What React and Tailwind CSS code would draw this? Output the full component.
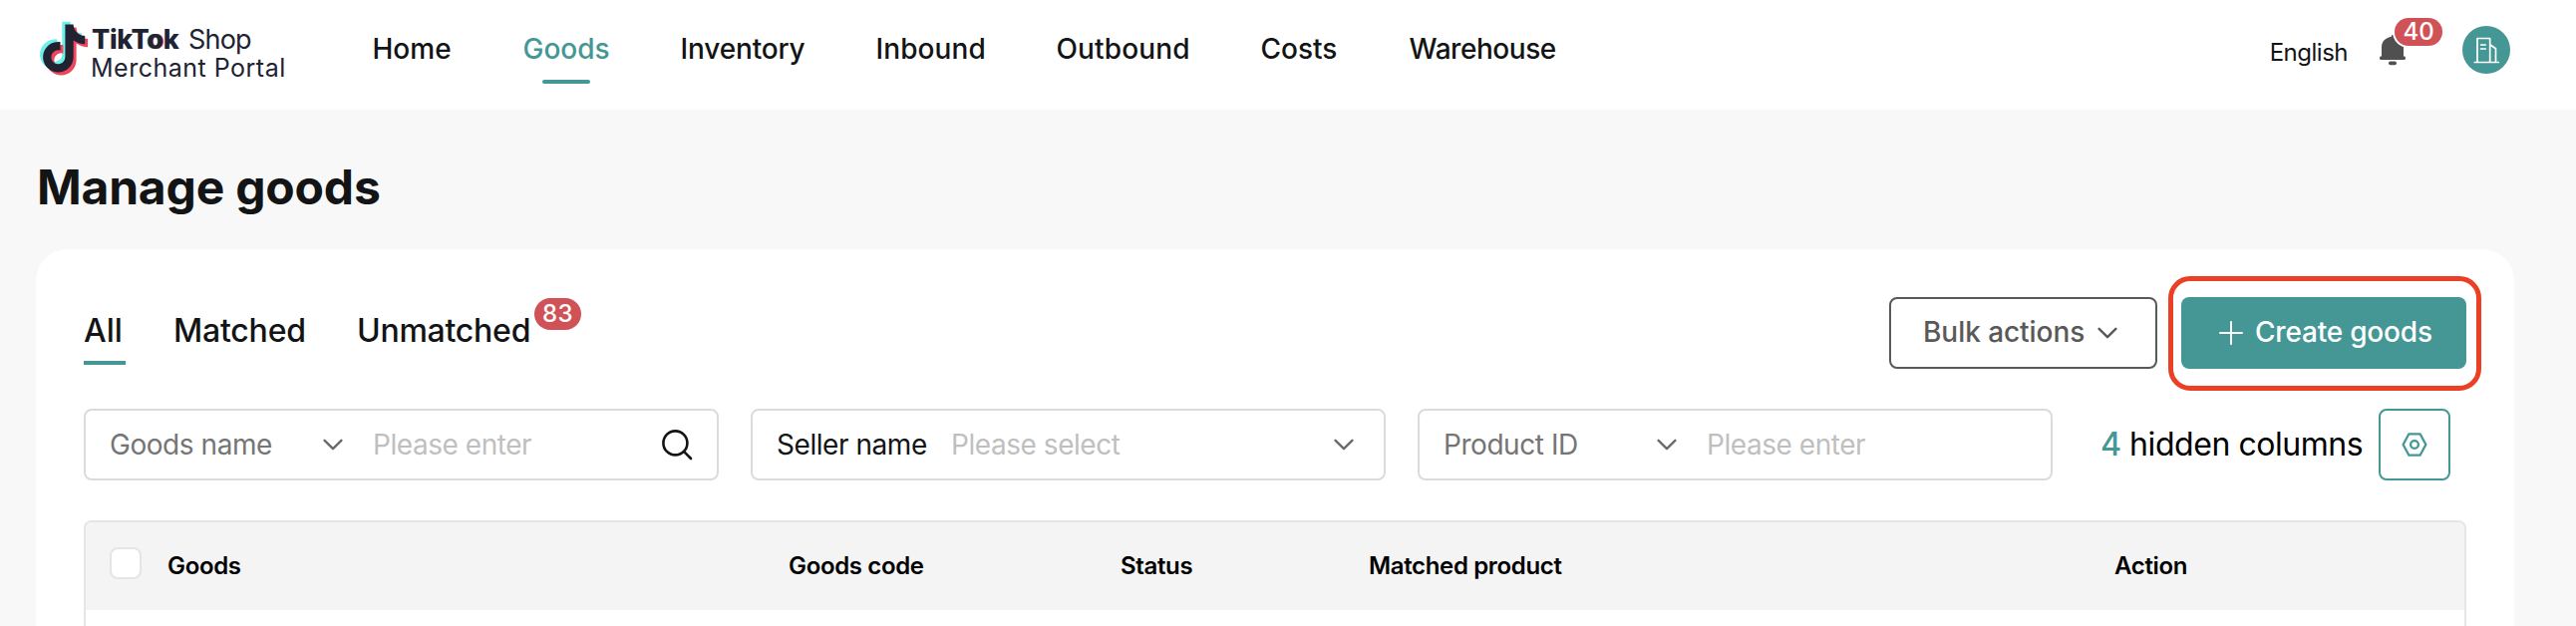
import React, { useState } from "react";

const navItems = [
  { name: "Home", style: "w-[79px]" },
  { name: "Goods", style: "w-[86px]" },
  { name: "Inventory", style: "w-[124px] tracking-[-0.15px]" },
  { name: "Inbound", style: "w-[109px] tracking-[0.1px]" },
  { name: "Outbound", style: "w-[133px] tracking-[0.15px]" },
  { name: "Costs", style: "w-[77px]" },
  { name: "Warehouse", style: "w-[149px] tracking-[-0.45px]" },
];

const columns = [
  { name: "Goods", style: "w-[623px]" },
  { name: "Goods code", style: "w-[333px]" },
  { name: "Status", style: "w-[249px]" },
  { name: "Matched product", style: "w-[748px]" },
  { name: "Action", style: "flex-1" },
];

const notePath =
  "M448,209.91a210.06,210.06,0,0,1-122.77-39.25V349.38A162.55,162.55,0,1,1,185,188.31V278.2a74.62,74.62,0,1,0,52.23,71.18V0l88,0a121.18,121.18,0,0,0,1.86,22.17h0A122.18,122.18,0,0,0,381,102.39a121.43,121.43,0,0,0,67,20.14Z";

const Chevron = ({ className = "" }) => (
  <svg
    className={`w-[20px] h-[12px] shrink-0 ${className}`}
    viewBox="0 0 20 12"
    fill="none"
    stroke="currentColor"
    strokeWidth="2.4"
    strokeLinecap="round"
    strokeLinejoin="round"
  >
    <path d="M1.6 1.8L10 10.2L18.4 1.8" />
  </svg>
);

const Logo = () => (
  <div className="flex items-start ml-10 mt-[21px]">
    <svg className="w-[49px] h-[56px] shrink-0" viewBox="0 0 49 56">
      <g transform="translate(0 0.8) scale(0.094)">
        <path d={notePath} fill="#6df0ea" />
      </g>
      <g transform="translate(6 6.4) scale(0.094)">
        <path d={notePath} fill="#f0435c" />
      </g>
      <g transform="translate(3.1 3.4) scale(0.094)">
        <path d={notePath} fill="#212332" />
      </g>
    </svg>
    <div className="ml-[3px] mt-[3px] text-[#212332] whitespace-nowrap">
      <div className="flex text-[27px] leading-8">
        <span className="w-[97px] font-extrabold tracking-[-0.3px]">
          TikT
          <span className="[text-shadow:-1px_0_0_#6df0ea,1px_0_0_#f0435c]">o</span>k
        </span>
        <span className="tracking-[-0.8px]">Shop</span>
      </div>
      <div className="-ml-px text-[25px] leading-6 tracking-[0.5px]">
        Merchant Portal
      </div>
    </div>
  </div>
);

const Header = () => {
  const [active, setActive] = useState("Goods");

  return (
    <header className="flex h-[110px] bg-white">
      <div className="w-[373.5px] shrink-0">
        <Logo />
      </div>
      <nav className="flex gap-[72px] h-[84px] pt-[31px]">
        {navItems.map((item) => (
          <button
            key={item.name}
            className={`flex flex-col items-start justify-between text-[28px] leading-9 font-medium whitespace-nowrap ${
              item.style
            } ${active === item.name ? "text-[#449794]" : "text-[#121415]"}`}
            onClick={() => setActive(item.name)}
          >
            {item.name}
            {active === item.name && (
              <span className="self-center w-12 h-1 rounded-full bg-[#449794]"></span>
            )}
          </button>
        ))}
      </nav>
      <div className="ml-auto mr-[66px] h-[100px] flex items-center">
        <span className="pt-[5px] mr-8 text-[24px] leading-8 tracking-[-0.5px] text-[#121415]">
          English
        </span>
        <div className="relative mr-[57px]">
          <svg className="w-[26px] h-[32px]" viewBox="0 0 26 32" fill="#505050">
            <path d="M13 .8c.7 0 1.2 1 1.2 2C19.5 3.6 24 7.5 24 13v9.5h.8c.7 0 1.2.6 1.2 1.8s-.5 1.7-1.2 1.7H1.2C.5 26 0 25.5 0 24.3s.5-1.8 1.2-1.8H2V13C2 7.5 6.5 3.6 11.8 2.8c0-1 .5-2 1.2-2z" />
            <rect x="9" y="27.5" width="8" height="3.7" rx="1.8" />
          </svg>
          <span className="absolute -top-4 left-[15px] w-12 h-7 rounded-full bg-[#d05257] ring-2 ring-white text-white text-[24px] leading-7 font-medium text-center">
            40
          </span>
        </div>
        <div className="w-12 h-12 rounded-full bg-[#449794]">
          <svg
            viewBox="0 0 48 48"
            fill="none"
            stroke="white"
            strokeWidth="1.7"
            strokeLinecap="round"
            strokeLinejoin="round"
          >
            <path d="M12.3 36.5h24M15 36V12.5h12.7V36M28.5 19.2l5 3.6V36M18.6 19h4.6M18.6 23h4.6" />
          </svg>
        </div>
      </div>
    </header>
  );
};

const Tabs = () => {
  const [tab, setTab] = useState("All");
  const tabs = [
    { name: "All", style: "w-[42px]" },
    { name: "Matched", style: "w-[136px] tracking-[-0.2px]" },
    { name: "Unmatched", style: "w-[176px] tracking-[-0.25px]", count: 83 },
  ];

  return (
    <div className="flex gap-12 h-[68px] pt-[14px]">
      {tabs.map((t) => (
        <button
          key={t.name}
          className={`relative flex text-[32px] leading-10 font-medium border-b-4 ${
            t.style
          } ${tab === t.name ? "border-[#449794]" : "border-transparent"}`}
          onClick={() => setTab(t.name)}
        >
          {t.name}
          {t.count && (
            <span className="absolute -top-[13px] left-[178px] w-[47px] h-8 rounded-full bg-[#d05257] text-white text-[24px] leading-[31px] tracking-[0.5px] text-center">
              {t.count}
            </span>
          )}
        </button>
      ))}
    </div>
  );
};

const Filter = ({ children }) => (
  <div className="flex items-center w-[637px] h-[72px] pl-6 pb-px border-2 border-[#dbdbdb] rounded-lg text-[28px] tracking-[-0.45px] whitespace-nowrap">
    {children}
  </div>
);

const App = () => {
  return (
    <div className="h-[628px] overflow-hidden bg-[#f8f8f8] font-[Inter,sans-serif]">
      <Header />
      <main className="px-9 pt-12">
        <h1 className="h-[92px] pl-px text-[48px] leading-[60px] font-bold tracking-[-0.2px] text-[#121415]">
          Manage goods
        </h1>
        <section className="w-[2486px] h-[420px] pt-12 px-12 bg-white rounded-t-[32px]">
          <div className="flex justify-between text-[#121415]">
            <Tabs />
            <div className="flex gap-6 text-[28px] font-medium whitespace-nowrap">
              <button className="flex items-center w-[269px] h-[72px] pl-8 pb-[2px] border-2 border-[#595959] rounded-lg text-[#595959] tracking-[-0.05px]">
                Bulk actions
                <Chevron className="ml-auto mr-[38px] mt-[2px]" />
              </button>
              <button className="relative flex items-center w-[286px] h-[72px] pl-[38px] rounded-lg bg-[#449794] text-white tracking-[-0.2px]">
                <svg
                  className="w-6 h-6 mr-3"
                  viewBox="0 0 24 24"
                  stroke="white"
                  strokeWidth="2"
                  strokeLinecap="round"
                >
                  <path d="M12 1v22M1 12h22" />
                </svg>
                <span className="pb-[2px]">Create goods</span>
                <span className="absolute -top-[21px] -left-[13px] w-[314px] h-[115px] border-5 border-[#eb4026] rounded-[22px]"></span>
              </button>
            </div>
          </div>

          {/* filters */}
          <div className="flex items-center mt-10">
            <div className="flex gap-8">
              <Filter>
                <span className="w-[214px] text-[#757575]">Goods name</span>
                <Chevron className="text-[#6b6b6b]" />
                <span className="ml-[30px] text-[#bfbfbf]">Please enter</span>
                <svg
                  className="ml-auto mr-6 w-8 h-8"
                  viewBox="0 0 32 32"
                  fill="none"
                  stroke="#121415"
                  strokeWidth="2.6"
                  strokeLinecap="round"
                >
                  <circle cx="14.4" cy="14.4" r="12" />
                  <path d="M23.2 23.2L30 30" />
                </svg>
              </Filter>
              <Filter>
                <span className="w-[175px] text-[#121415]">Seller name</span>
                <span className="text-[#bfbfbf]">Please select</span>
                <Chevron className="ml-auto mr-[30px] text-[#6b6b6b]" />
              </Filter>
              <Filter>
                <span className="w-[214px] text-[#757575]">Product ID</span>
                <Chevron className="text-[#6b6b6b]" />
                <span className="ml-[30px] text-[#bfbfbf]">Please enter</span>
              </Filter>
            </div>
            <p className="ml-12 text-[32px] leading-10 tracking-[-0.45px] whitespace-nowrap text-black">
              <span className="text-[#449794] font-medium">4</span> hidden columns
            </p>
            <button className="ml-auto mr-4 flex items-center justify-center w-[72px] h-[72px] border-2 border-[#449794] rounded-lg">
              <svg
                className="w-[26px] h-6"
                viewBox="0 0 26 24"
                fill="none"
                stroke="#449794"
                strokeWidth="2.3"
                strokeLinejoin="round"
              >
                <path d="M1.6 12L7.4 1.3H18.6L24.4 12L18.6 22.7H7.4Z" />
                <circle cx="13" cy="12" r="3.9" />
              </svg>
            </button>
          </div>

          {/* table */}
          <div className="mt-10 h-[140px] border-2 border-b-0 border-[#e5e5e5] rounded-t-lg">
            <div className="flex items-center h-[88px] pl-6 bg-[#f4f4f4] rounded-t-md">
              <span className="w-8 h-8 mr-[26px] mb-[6px] bg-white border-2 border-[#e5e5e5] rounded-lg"></span>
              {columns.map((col) => (
                <span
                  key={col.name}
                  className={`text-[24px] leading-8 font-semibold tracking-[-0.35px] text-black ${col.style}`}
                >
                  {col.name}
                </span>
              ))}
            </div>
          </div>
        </section>
      </main>
    </div>
  );
};

export default App;
